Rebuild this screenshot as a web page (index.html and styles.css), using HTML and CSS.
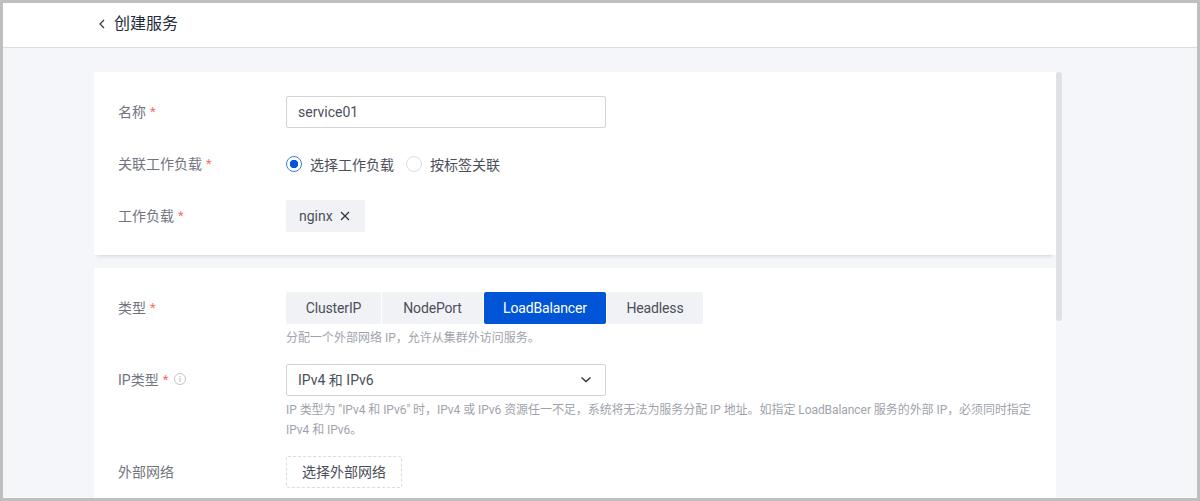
FILE: index.html
```html
<!DOCTYPE html>
<html lang="zh-CN">
<head>
<meta charset="utf-8">
<title>创建服务</title>
<link rel="stylesheet" href="styles.css">
</head>
<body>
<div class="frame">
  <header class="topbar">
    <svg class="back" width="8" height="12" viewBox="0 0 8 12"><path d="M6 2 2 6l4 4" fill="none" stroke="#333" stroke-width="1.2"/></svg>
    <h1 class="title">创建服务</h1>
  </header>
  <main class="content">
    <div class="scrollbar"></div>
    <section class="card card-first">
      <div class="row">
        <label class="label">名称 <span class="req">*</span></label>
        <div class="input">service01</div>
      </div>
      <div class="row">
        <label class="label">关联工作负载 <span class="req">*</span></label>
        <div class="radios">
          <span class="radio radio-on"></span><span class="radio-text">选择工作负载</span>
          <span class="radio"></span><span class="radio-text">按标签关联</span>
        </div>
      </div>
      <div class="row">
        <label class="label">工作负载 <span class="req">*</span></label>
        <div class="tag">nginx
          <svg width="10" height="10" viewBox="0 0 10 10"><path d="M1 1l8 8M9 1l-8 8" stroke="#333" stroke-width="1.2" fill="none"/></svg>
        </div>
      </div>
    </section>
    <section class="card card-second">
      <div class="row">
        <label class="label">类型 <span class="req">*</span></label>
        <div class="tabs">
          <div class="tab tab-a">ClusterIP</div>
          <div class="tab tab-b">NodePort</div>
          <div class="tab tab-c tab-active">LoadBalancer</div>
          <div class="tab tab-d">Headless</div>
        </div>
      </div>
      <p class="hint hint-type">分配一个外部网络 IP，允许从集群外访问服务。</p>
      <div class="row">
        <label class="label">IP类型 <span class="req">*</span>
          <svg class="info" width="14" height="14" viewBox="0 0 14 14"><circle cx="7" cy="7" r="5.5" fill="none" stroke="#c4c6cc"/><path d="M7 6v4M7 4v1.2" stroke="#b4b6bc" fill="none"/></svg>
        </label>
        <div class="input select">IPv4 和 IPv6
          <svg width="12" height="8" viewBox="0 0 12 8"><path d="M1.5 1.5 6 5.5l4.5-4" fill="none" stroke="#333" stroke-width="1.4"/></svg>
        </div>
      </div>
      <p class="hint hint-ip">IP 类型为 "IPv4 和 IPv6" 时，IPv4 或 IPv6 资源任一不足，系统将无法为服务分配 IP 地址。如指定 LoadBalancer 服务的外部 IP，必须同时指定 IPv4 和 IPv6。</p>
      <div class="row">
        <label class="label">外部网络</label>
        <div class="dashed">选择外部网络</div>
      </div>
    </section>
  </main>
</div>
</body>
</html>
```
FILE: styles.css
```css
* { box-sizing: border-box; }
html, body { margin: 0; height: 501px; overflow: hidden; }
body {
  font-family: Roboto, "Noto Sans CJK SC", sans-serif;
  font-size: 14px;
  color: #333;
}
.frame {
  height: 501px;
  border: 3px solid #bfbfbf;
  background: #f5f6fa;
  overflow: hidden;
}
.topbar {
  height: 45px;
  background: #fff;
  border-bottom: 1px solid #dcdde1;
  padding: 0 0 2px 95px;
  display: flex;
  align-items: center;
  gap: 8px;
}
.title {
  margin: 0;
  font-size: 16px;
  font-weight: 400;
  color: #252b3a;
  line-height: 24px;
}
.content {
  position: relative;
  padding: 24px 141px 0 91px;
}
.scrollbar {
  position: absolute;
  left: 1053px;
  top: 24px;
  width: 6px;
  height: 249px;
  border-radius: 3px;
  background: #dfe0e4;
}
.card {
  background: #fff;
  padding: 24px 24px 0;
}
.card-first {
  padding-bottom: 23px;
  margin-bottom: 13px;
  box-shadow: 0 4px 4px -3px rgba(0, 0, 0, .14);
  border-radius: 2px 2px 0 0;
}
.card-second { padding-bottom: 24px; }
.row {
  display: flex;
  align-items: center;
  min-height: 32px;
  margin-bottom: 20px;
}
.row:last-child { margin-bottom: 0; }
.label {
  flex: 0 0 168px;
  color: #71757f;
  display: flex;
  align-items: center;
  gap: 4px;
  padding-bottom: 2px;
}
.req { color: #f66f6a; font-size: 13px; }
.info { margin-left: 1px; }
.input {
  width: 320px;
  height: 32px;
  border: 1px solid #d3d4d8;
  border-radius: 2px;
  padding: 0 11px;
  line-height: 30px;
  color: #4b4f5a;
}
.select {
  display: flex;
  align-items: center;
  justify-content: space-between;
  padding-right: 13px;
}
.radios {
  display: flex;
  align-items: center;
}
.radio {
  width: 16px;
  height: 16px;
  border-radius: 50%;
  border: 1px solid #dcdde1;
  margin-right: 8px;
}
.radio-on {
  border-color: #3b7ee0;
  background: radial-gradient(circle, #0055d6 0 4px, #fff 4.5px);
}
.radio-text { color: #4b4f5a; margin-right: 12px; }
.tag {
  height: 32px;
  width: 79px;
  background: #f1f2f5;
  border-radius: 2px;
  padding: 0 13px;
  display: flex;
  align-items: center;
  gap: 7px;
  color: #4b4f5a;
}
.tabs { display: flex; gap: 1px; letter-spacing: -.15px; }
.tab {
  height: 32px;
  line-height: 32px;
  text-align: center;
  background: #f1f2f5;
  color: #4b4f5a;
  border-radius: 2px;
}
.tab-a { width: 95px; }
.tab-b { width: 101px; }
.tab-c { width: 122px; }
.tab-d { width: 96px; }
.tab-active { background: #0055d6; color: #fff; }
.hint {
  margin: 0 0 0 168px;
  font-size: 12px;
  line-height: 20px;
  color: #a0a3ab;
}
.hint-type { margin-top: 4px; margin-bottom: 16px; }
.hint-ip { margin-top: 4px; margin-bottom: 16px; letter-spacing: -.06px; }
.row:has(+ .hint) { margin-bottom: 0; }
.dashed {
  width: 116px;
  height: 32px;
  line-height: 30px;
  text-align: center;
  border: 1px dashed #dcdde1;
  border-radius: 2px;
  color: #4b4f5a;
}
```
